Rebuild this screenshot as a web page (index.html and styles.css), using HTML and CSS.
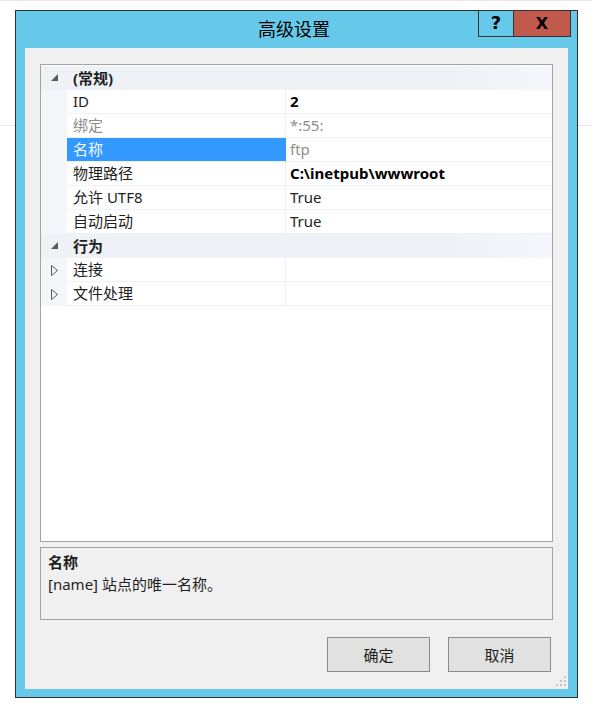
FILE: index.html
```html
<!DOCTYPE html>
<html lang="zh-CN">
<head>
<meta charset="utf-8">
<title>高级设置</title>
<link rel="stylesheet" href="styles.css">
</head>
<body>
<div class="window">
  <div class="titlebar">
    <div></div>
    <div class="title">高级设置</div>
    <div class="caption-btns">
      <div class="cap-help">?</div>
      <div class="cap-close">X</div>
    </div>
  </div>
  <div class="client">
    <div class="propgrid">
      <div class="row cat">
        <span class="gut"><svg class="tri-exp" width="7" height="7" viewBox="0 0 7 7"><polygon points="7,0 7,7 0,7" fill="#595959"/></svg></span>
        <span class="cat-label">(常规)</span>
      </div>
      <div class="row prop">
        <span class="gut"></span><span class="name">ID</span><span class="val bold">2</span>
      </div>
      <div class="row prop">
        <span class="gut"></span><span class="name ro">绑定</span><span class="val ro">*:55:</span>
      </div>
      <div class="row prop">
        <span class="gut"></span><span class="name sel">名称</span><span class="val ro">ftp</span>
      </div>
      <div class="row prop">
        <span class="gut"></span><span class="name">物理路径</span><span class="val bold">C:\inetpub\wwwroot</span>
      </div>
      <div class="row prop">
        <span class="gut"></span><span class="name">允许 UTF8</span><span class="val">True</span>
      </div>
      <div class="row prop">
        <span class="gut"></span><span class="name">自动启动</span><span class="val">True</span>
      </div>
      <div class="row cat">
        <span class="gut"><svg class="tri-exp" width="7" height="7" viewBox="0 0 7 7"><polygon points="7,0 7,7 0,7" fill="#595959"/></svg></span>
        <span class="cat-label">行为</span>
      </div>
      <div class="row prop">
        <span class="gut"><svg class="tri-col" width="7" height="11" viewBox="0 0 7 11"><polygon points="0.5,0.5 6.5,5.5 0.5,10.5" fill="none" stroke="#555" stroke-width="1"/></svg></span>
        <span class="name">连接</span><span class="val"></span>
      </div>
      <div class="row prop">
        <span class="gut"><svg class="tri-col" width="7" height="11" viewBox="0 0 7 11"><polygon points="0.5,0.5 6.5,5.5 0.5,10.5" fill="none" stroke="#555" stroke-width="1"/></svg></span>
        <span class="name">文件处理</span><span class="val"></span>
      </div>
    </div>
    <div class="desc">
      <div class="desc-title">名称</div>
      <div class="desc-text">[name] 站点的唯一名称。</div>
    </div>
    <div class="actions">
      <button class="btn">确定</button>
      <button class="btn">取消</button>
    </div>
    <svg class="grip" width="10" height="10" viewBox="0 0 10 10">
      <rect x="8" y="0" width="2" height="2" fill="#c4c4c4"/>
      <rect x="4" y="4" width="2" height="2" fill="#c4c4c4"/>
      <rect x="8" y="4" width="2" height="2" fill="#c4c4c4"/>
      <rect x="0" y="8" width="2" height="2" fill="#c4c4c4"/>
      <rect x="4" y="8" width="2" height="2" fill="#c4c4c4"/>
      <rect x="8" y="8" width="2" height="2" fill="#c4c4c4"/>
    </svg>
  </div>
</div>
</body>
</html>
```

FILE: styles.css
```css
* { box-sizing: border-box; }

html, body {
  margin: 0;
  padding: 0;
}

body {
  width: 592px;
  height: 711px;
  overflow: hidden;
  background-color: #ffffff;
  background-image:
    linear-gradient(#e9e9e9, #e9e9e9),
    linear-gradient(#e6ebf1, #e6ebf1);
  background-repeat: no-repeat;
  background-size: 592px 1px, 592px 1px;
  background-position: 0 0, 0 125px;
  font-family: "Noto Sans", "Noto Sans CJK SC", sans-serif;
  font-size: 15px;
  color: #000;
}

.window {
  margin: 10px 0 0 15px;
  width: 563px;
  height: 688px;
  border: 1px solid #2d2d2d;
  background: #66c9e9;
  display: flex;
  flex-direction: column;
}

.titlebar {
  height: 37px;
  display: grid;
  grid-template-columns: 1fr auto 1fr;
  align-items: center;
  padding-right: 6px;
}

.title {
  font-size: 18px;
  line-height: 37px;
  color: #000;
  padding-left: 1px;
}

.caption-btns {
  justify-self: end;
  align-self: start;
  margin-top: -1px;
  display: flex;
  height: 27px;
  border: 1px solid #333;
}

.cap-help {
  width: 35px;
  border-right: 1px solid #333;
  background: #66c9e9;
  font-family: "DejaVu Sans", sans-serif;
  font-weight: bold;
  font-size: 18px;
  line-height: 23px;
  text-align: center;
}

.cap-close {
  width: 56px;
  background: #c1594d;
  font-family: "DejaVu Sans", sans-serif;
  font-weight: bold;
  font-size: 16px;
  line-height: 25px;
  text-align: center;
}

.client {
  flex: 1;
  margin: 0 9px 8px 9px;
  background: #f0f0f0;
  padding: 16px 15px 17px 15px;
  display: flex;
  flex-direction: column;
  position: relative;
}

.propgrid {
  height: 478px;
  border: 1px solid #a3a3a3;
  background: #ffffff;
  padding-top: 1px;
  display: flex;
  flex-direction: column;
}

.row {
  display: grid;
  grid-template-columns: 26px 219px 1fr;
  height: 24px;
}

.row.cat {
  grid-template-columns: 26px 1fr;
  background: linear-gradient(90deg, #eef1f6 0%, #eef1f6 80%, #f4f7fb 100%);
}

.gut {
  display: flex;
  align-items: center;
  padding-left: 10px;
}

.row.prop .gut {
  background: #f4f6f9;
}

.tri-exp {
  margin-top: -1px;
}

.tri-col {
  margin-left: 0;
}

.cat-label {
  padding-left: 6px;
  font-weight: bold;
  line-height: 24px;
  color: #1e1e1e;
}

.name {
  border-right: 1px solid #eef1f6;
  border-bottom: 1px solid #eef1f6;
  padding-left: 6px;
  line-height: 23px;
  white-space: nowrap;
  color: #1e1e1e;
}

.val {
  border-bottom: 1px solid #eef1f6;
  padding-left: 4px;
  line-height: 23px;
  white-space: nowrap;
  color: #1e1e1e;
}

.bold {
  font-weight: bold;
  color: #000;
}

.ro {
  color: #8e8e8e;
}

.name.sel {
  background: #3399ff;
  color: #f4f9ff;
  border-right-color: #3399ff;
}

.desc {
  margin-top: 5px;
  height: 73px;
  border: 1px solid #a3a3a3;
  background: #f0f0f0;
  padding: 3px 7px 0 7px;
  line-height: 22px;
  color: #1e1e1e;
}

.desc-title {
  font-weight: bold;
}

.actions {
  margin-top: 17px;
  display: flex;
  justify-content: flex-end;
  gap: 18px;
  padding-right: 2px;
}

.btn {
  width: 103px;
  height: 35px;
  border: 1px solid #8c8c8c;
  background: #e1e1e1;
  font-family: "Noto Sans CJK SC", sans-serif;
  font-size: 15px;
  color: #1e1e1e;
  padding: 0;
  margin: 0;
}

.grip {
  position: absolute;
  right: 2px;
  bottom: 3px;
}
```
